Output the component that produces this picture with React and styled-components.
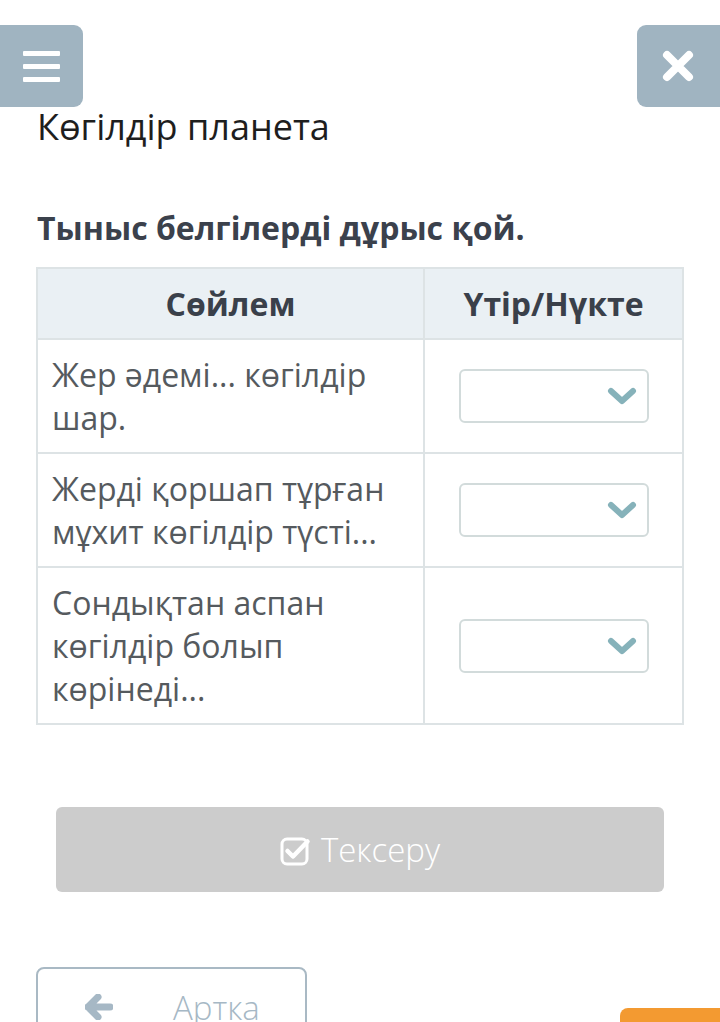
import styled, { createGlobalStyle } from "styled-components";

const GlobalStyle = createGlobalStyle`
  html, body {
    margin: 0;
    padding: 0;
    background: #ffffff;
    font-family: "Open Sans", "Noto Sans", sans-serif;
  }
  body {
    overflow: hidden;
  }
`;

const rows = [
  { id: 1, text: "Жер әдемі... көгілдір шар." },
  { id: 2, text: "Жерді қоршап тұрған мұхит көгілдір түсті..." },
  { id: 3, text: "Сондықтан аспан көгілдір болып көрінеді..." },
];

const App = () => {
  return (
    <Page>
      <GlobalStyle />
      <TopBar>
        <CornerButton side="left" aria-label="menu">
          <Burger>
            <span />
            <span />
            <span />
          </Burger>
        </CornerButton>
        <CornerButton side="right" aria-label="close">
          <svg width="32" height="32" viewBox="0 0 32 32">
            <path
              d="M5 5 L27 27 M27 5 L5 27"
              stroke="#fff"
              strokeWidth="8"
              strokeLinecap="round"
            />
          </svg>
        </CornerButton>
      </TopBar>

      <Title>Көгілдір планета</Title>
      <Task>Тыныс белгілерді дұрыс қой.</Task>

      <Table>
        <thead>
          <tr>
            <HeadCell style={{ width: 385 }}>Сөйлем</HeadCell>
            <HeadCell>Үтір/Нүкте</HeadCell>
          </tr>
        </thead>
        <tbody>
          {rows.map((row) => (
            <tr key={row.id}>
              <TextCell>{row.text}</TextCell>
              <SelectCell>
                <Select>
                  <svg width="30" height="20" viewBox="0 0 30 20">
                    <path
                      d="M4 5 L15 15 L26 5"
                      fill="none"
                      stroke="#86b2ba"
                      strokeWidth="6"
                      strokeLinecap="round"
                      strokeLinejoin="round"
                    />
                  </svg>
                </Select>
              </SelectCell>
            </tr>
          ))}
        </tbody>
      </Table>

      <CheckButton>
        <svg width="32" height="30" viewBox="0 0 32 30">
          <rect
            x="2"
            y="3"
            width="25"
            height="25"
            rx="5"
            fill="none"
            stroke="#fff"
            strokeWidth="3"
          />
          <path
            d="M7.5 15 L13 20.5 L27.5 5.5"
            fill="none"
            stroke="#fff"
            strokeWidth="4.5"
            strokeLinecap="round"
            strokeLinejoin="round"
          />
        </svg>
        Тексеру
      </CheckButton>

      <Footer>
        <BackButton>
          <svg width="28" height="26" viewBox="0 0 28 26">
            <path
              d="M13 3 L3 13 L13 23 M3 13 H25"
              fill="none"
              stroke="#a6b8c5"
              strokeWidth="7"
              strokeLinecap="round"
              strokeLinejoin="round"
            />
          </svg>
          <span>Артка</span>
        </BackButton>
        <NextButton />
      </Footer>
    </Page>
  );
};

export default App;

const Page = styled.div`
  width: 720px;
  height: 1022px;
  overflow: hidden;
`;

const TopBar = styled.div`
  display: flex;
  justify-content: space-between;
  padding-top: 25px;
  height: 82px;
`;

const CornerButton = styled.div`
  width: 83px;
  height: 82px;
  background: #a0b4c1;
  display: flex;
  align-items: center;
  justify-content: center;
  border-radius: ${(p) => (p.side === "left" ? "0 9px 9px 0" : "9px 0 0 9px")};
  svg {
    margin-left: ${(p) => (p.side === "right" ? "-1px" : "0")};
  }
`;

const Burger = styled.div`
  display: flex;
  flex-direction: column;
  gap: 8px;
  margin-left: -1px;
  span {
    display: block;
    width: 37px;
    height: 5px;
    border-radius: 1px;
    background: #fff;
  }
`;

const Title = styled.h1`
  margin: 0 0 0 37px;
  font-size: 36px;
  line-height: 40px;
  font-weight: 400;
  color: #1e1e1e;
`;

const Task = styled.h2`
  margin: 62px 0 0 37px;
  font-size: 32px;
  line-height: 38px;
  font-weight: 700;
  color: #3b414c;
`;

const Table = styled.table`
  margin: 20px 0 0 36px;
  width: 648px;
  border-collapse: collapse;
  table-layout: fixed;
  td,
  th {
    border: 2px solid #dde3e5;
  }
`;

const HeadCell = styled.th`
  height: 69px;
  padding: 0;
  background: #eaf0f4;
  font-size: 32px;
  font-weight: 700;
  color: #3a404a;
  text-align: center;
`;

const TextCell = styled.td`
  padding: 13px 14px;
  font-size: 32px;
  line-height: 43px;
  color: #555a5e;
  vertical-align: middle;
`;

const SelectCell = styled.td`
  padding: 0;
  vertical-align: middle;
`;

const Select = styled.div`
  margin: 0 auto;
  height: 50px;
  border: 2px solid #d2dbdb;
  border-radius: 6px;
  display: flex;
  align-items: center;
  justify-content: flex-end;
  padding-right: 10px;
  box-sizing: content-box;
  width: 176px;
`;

const CheckButton = styled.div`
  margin: 82px 56px 0;
  height: 85px;
  border-radius: 6px;
  background: #cccccc;
  color: #fff;
  display: flex;
  align-items: center;
  justify-content: center;
  gap: 9px;
  font-size: 33px;
  font-weight: 300;
  svg {
    margin-top: 2px;
  }
`;

const Footer = styled.div`
  display: flex;
  justify-content: space-between;
  align-items: flex-start;
  margin-top: 75px;
  padding-left: 36px;
`;

const BackButton = styled.div`
  width: 271px;
  height: 70px;
  border: 2px solid #a9b9c4;
  border-radius: 8px;
  display: flex;
  align-items: center;
  padding-top: 10px;
  box-sizing: border-box;
  color: #a6b8c5;
  font-size: 33px;
  font-weight: 300;
  svg {
    margin-left: 47px;
    margin-right: 60px;
  }
`;

const NextButton = styled.div`
  margin-top: 41px;
  width: 100px;
  height: 40px;
  background: #f39a31;
  border-radius: 8px 0 0 0;
`;
